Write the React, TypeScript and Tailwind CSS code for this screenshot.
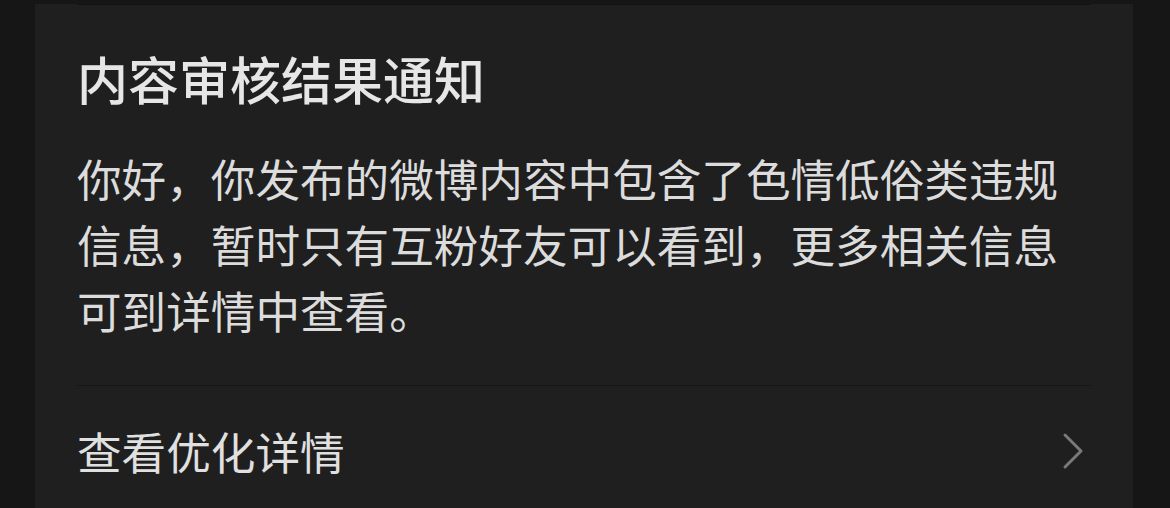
import React from 'react';

// 内容审核结果通知 卡片（深色模式）

const FONT = { fontFamily: '"Noto Sans CJK SC", "Noto Sans", sans-serif' };

const ChevronRight: React.FC = () => (
  <svg width="22" height="38" viewBox="0 0 22 38" fill="none" className="mr-[7px]">
    <polyline
      points="3,3 19,19 3,35"
      stroke="#7a7a7a"
      strokeWidth="3"
      strokeLinecap="round"
      strokeLinejoin="round"
    />
  </svg>
);

export default function App() {
  return (
    <div className="h-[508px] w-[1170px] bg-[#161616] overflow-hidden" style={FONT}>
      <div className="ml-[35px] w-[1098px] h-full bg-[#1f1f1f] px-[42px]">
        <div className="mt-[4px] h-px bg-[#121212]" />

        <h1 className="mt-[42px] text-[51px] leading-[62px] font-medium text-[#e6e6e6]">
          内容审核结果通知
        </h1>

        <p className="mt-[36px] text-[44.6px] leading-[66px] text-[#dcdcdc]">
          你好，你发布的微博内容中包含了色情低俗类违规信息，暂时只有互粉好友可以看到，更多相关信息可到详情中查看。
        </p>

        <div className="mt-[42px] h-px bg-[#161616]" />

        <div className="flex items-center justify-between h-[130px]">
          <span className="text-[44.6px] leading-none text-[#e0e0e0]">查看优化详情</span>
          <ChevronRight />
        </div>
      </div>
    </div>
  );
}
